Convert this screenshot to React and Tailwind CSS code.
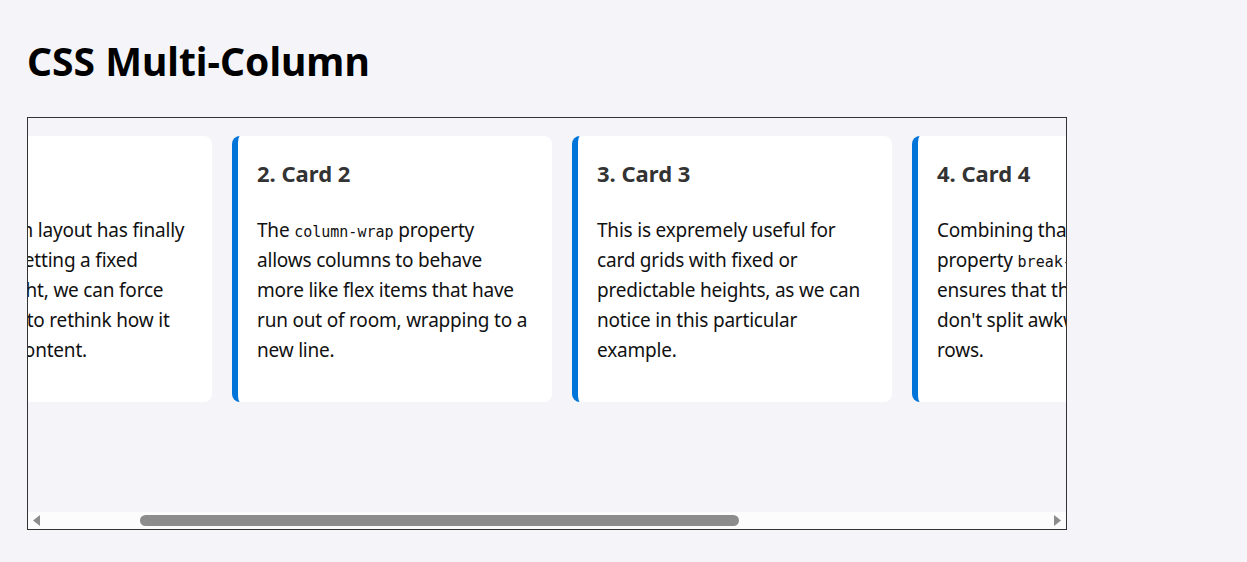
import { useEffect, useRef } from 'react';

const cards = [
  {
    title: '1. Card 1',
    body: ['Multi-column layout has finally arrived. By setting a fixed column height, we can force the browser to rethink how it distributes content.'],
  },
  {
    title: '2. Card 2',
    body: ['The ', { code: 'column-wrap' }, ' property allows columns to behave more like flex items that have run out of room, wrapping to a new line.'],
  },
  {
    title: '3. Card 3',
    body: ['This is expremely useful for card grids with fixed or predictable heights, as we can notice in this particular example.'],
  },
  {
    title: '4. Card 4',
    body: ['Combining that with the property ', { code: 'break-inside: avoid' }, ' ensures that these elements don\'t split awkwardly across rows.'],
  },
  {
    title: '5. Card 5',
    body: ['Scroll sideways to see every column, each one keeps its own height and spacing.'],
  },
];

const Card = ({ title, body }) => (
  <div className="w-[320px] h-[266px] shrink-0 bg-white rounded-lg border-l-[6px] border-[#0074d9] pt-[21px] pl-[19px] pr-5">
    <h3 className="text-[22px] leading-8 font-bold text-[#333] mb-[26px]">{title}</h3>
    <p className="text-[19px] leading-[30px] tracking-[-0.2px] text-[#111]">
      {body.map((part, i) =>
        typeof part === 'string' ? (
          <span key={i}>{part}</span>
        ) : (
          <code key={i} className="font-['DejaVu_Sans_Mono',monospace] text-[15px] leading-none tracking-normal whitespace-nowrap">{part.code}</code>
        )
      )}
    </p>
  </div>
);

const Arrow = ({ left }) => (
  <div className="w-[17px] h-[17px] flex items-center justify-center">
    <svg width="9" height="11" viewBox="0 0 9 11">
      {left ? <path d="M8 0 L8 11 L1 5.5 Z" fill="#8c8c8c" /> : <path d="M1 0 L1 11 L8 5.5 Z" fill="#8c8c8c" />}
    </svg>
  </div>
);

export default function App() {
  const scroller = useRef(null);

  useEffect(() => {
    if (scroller.current) scroller.current.scrollLeft = 156;
  }, []);

  return (
    <div className="min-h-screen bg-[#f4f4f9] px-[27px] pt-[37px] font-['Noto_Sans',sans-serif]">
      <h1 className="text-[39px] leading-[48px] font-bold text-black mb-[32px]">CSS Multi-Column</h1>

      <div className="w-[1040px] border border-[#333]">
        <div ref={scroller} className="h-[394px] overflow-hidden">
          <div className="flex gap-5 px-5 pt-[18px] w-max">
            {cards.map((c) => (
              <Card key={c.title} {...c} />
            ))}
          </div>
        </div>

        <div className="h-[17px] flex items-center bg-[#fcfcfc]">
          <Arrow left />
          <div className="flex-1 h-full flex items-center">
            <div className="ml-[95px] w-[599px] h-[11px] rounded-full bg-[#8c8c8c]" />
          </div>
          <Arrow />
        </div>
      </div>
    </div>
  );
}
